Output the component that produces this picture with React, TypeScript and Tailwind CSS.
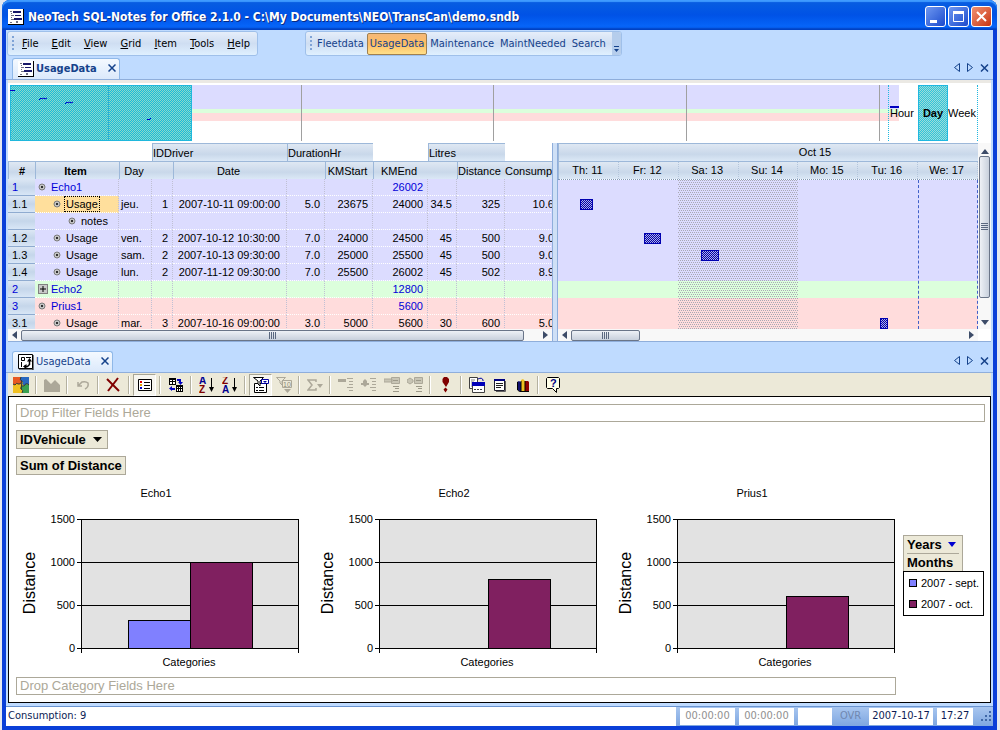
import { useId, type ReactNode } from "react";
import { clsx } from "clsx";

//@Types
interface IGridRow {
  num: string;
  label: string;
  level: number;
  tone: "violet" | "green" | "pink";
  parent?: boolean;
  plus?: boolean;
  selected?: boolean;
  cells: string[];
}

interface IChart {
  title: string;
  sept?: number;
  oct: number;
}
//------------------------------------------------------

//@Data
const menus = ["File", "Edit", "View", "Grid", "Item", "Tools", "Help"];
const views = ["Fleetdata", "UsageData", "Maintenance", "MaintNeeded", "Search"];

const rows: IGridRow[] = [
  { num: "1", label: "Echo1", level: 0, tone: "violet", parent: true, cells: ["", "", "", "", "", "26002", "", "", ""] },
  { num: "1.1", label: "Usage", level: 1, tone: "violet", selected: true, cells: ["jeu.", "1", "2007-10-11 09:00:00", "5.0", "23675", "24000", "34.5", "325", "10.6"] },
  { num: "", label: "notes", level: 2, tone: "violet", cells: ["", "", "", "", "", "", "", "", ""] },
  { num: "1.2", label: "Usage", level: 1, tone: "violet", cells: ["ven.", "2", "2007-10-12 10:30:00", "7.0", "24000", "24500", "45", "500", "9.0"] },
  { num: "1.3", label: "Usage", level: 1, tone: "violet", cells: ["sam.", "2", "2007-10-13 09:30:00", "7.0", "25000", "25500", "45", "500", "9.0"] },
  { num: "1.4", label: "Usage", level: 1, tone: "violet", cells: ["lun.", "2", "2007-11-12 09:30:00", "7.0", "25500", "26002", "45", "502", "8.9"] },
  { num: "2", label: "Echo2", level: 0, tone: "green", parent: true, plus: true, cells: ["", "", "", "", "", "12800", "", "", ""] },
  { num: "3", label: "Prius1", level: 0, tone: "pink", parent: true, cells: ["", "", "", "", "", "5600", "", "", ""] },
  { num: "3.1", label: "Usage", level: 1, tone: "pink", cells: ["mar.", "3", "2007-10-16 09:00:00", "3.0", "5000", "5600", "30", "600", "5.0"] },
];

const days = ["Th: 11", "Fr: 12", "Sa: 13", "Su: 14", "Mo: 15", "Tu: 16", "We: 17"];

const charts: IChart[] = [
  { title: "Echo1", sept: 325, oct: 1000 },
  { title: "Echo2", oct: 800 },
  { title: "Prius1", oct: 600 },
];

const tones = {
  violet: "bg-[#dcdcff]",
  green: "bg-[#dcffdc]",
  pink: "bg-[#ffdcdc]",
};

const levels = ["pl-[3px]", "pl-[18px]", "pl-[33px]"];
//------------------------------------------------------

//@Shared classes
const tahoma = "font-['DejaVu_Sans_Condensed','Noto_Sans',sans-serif]";
const header =
  "bg-linear-to-b from-[#dfe8f3] via-[#c9d8ea] via-60% to-[#dbe8f6] border-t border-[#9db8d9]";
const headCell = clsx(header, "h-[18px] p-0 border-l font-normal");
const plainHeadCell = clsx(header, "h-[18px] p-0");
const task = "absolute border border-[#0000b0]";
//------------------------------------------------------

// two-colour dither brush that fills its positioned parent
function Hatch({ a, b }: { a: string; b: string }) {
  const id = useId();
  return (
    <svg className="absolute inset-0 size-full" shapeRendering="crispEdges" aria-hidden="true">
      <defs>
        <pattern id={id} width="2" height="2" patternUnits="userSpaceOnUse">
          <path d="M0 0h2v2H0z" fill={b} />
          <path d="M0 0h1v1H0zM1 1h1v1H1z" fill={a} />
        </pattern>
      </defs>
      <rect width="100%" height="100%" fill={`url(#${id})`} />
    </svg>
  );
}

// dots over the weekend columns
function Dots() {
  const id = useId();
  return (
    <svg className="absolute inset-0 size-full" shapeRendering="crispEdges" aria-hidden="true">
      <defs>
        <pattern id={id} width="4" height="4" patternUnits="userSpaceOnUse">
          <path d="M0 0h1v1H0zM2 0h1v1H2zM1 2h1v1H1zM3 2h1v1H3z" fill="#a9a9b4" />
        </pattern>
      </defs>
      <rect width="100%" height="100%" fill={`url(#${id})`} />
    </svg>
  );
}

function OutlineIcon() {
  return (
    <svg width="16" height="16" viewBox="0 0 16 16" shapeRendering="crispEdges" aria-hidden="true">
      <path d="M0 0h16v16H0z" fill="#fff" />
      <path d="M15 0h1v16H0v-1h15z" fill="#000" />
      <path d="M2 2h2v1H2zM3 4h1v1H3zM3 6h3v1H3zM3 8h1v1H3zM3 10h3v1H3zM8 12h2v2H8zM2 13h2v1H2z" fill="#707080" />
      <path d="M5 2h8v2H5zM7 6h6v1H7zM6 9h8v2H6z" fill="#181868" />
    </svg>
  );
}

function PivotIcon() {
  return (
    <svg width="16" height="16" viewBox="0 0 16 16" aria-hidden="true">
      <path d="M.5.5h14v14H.5z" fill="#fff" stroke="#000" />
      <path d="M15 1v15H1" fill="none" stroke="#000" />
      <path d="M3.500 3.500h3v3h-3zM8 3.500h5M3.500 8v5" fill="none" stroke="#000" />
      <path d="M6 12.500h3.500l2-2V6" fill="none" stroke="#000" strokeWidth="1.500" />
      <path d="M9 7.500 11.500 4 14 7.500zM8.500 10 5 12.500 8.500 15z" fill="#000" />
    </svg>
  );
}

function TitleBar() {
  return (
    <header className="flex h-[30px] items-center gap-1 rounded-t-lg bg-linear-to-b from-[#0a5fe0] via-[#0052e6] to-[#0a6bff] pt-[3px] pr-[5px] pl-[6px] shadow-[inset_0_2px_1px_#3f9bff,inset_0_-2px_2px_#0040c0]">
      <OutlineIcon />
      <h1 className={clsx(tahoma, "grow truncate text-[12px] font-bold text-white [text-shadow:1px_1px_#0a2a80]")}>
        NeoTech SQL-Notes for Office 2.1.0 - C:\My Documents\NEO\TransCan\demo.sndb
      </h1>
      <div className="flex gap-[2px]">
        <button aria-label="Minimize" className="size-[21px] rounded-[3px] border border-white bg-linear-to-br from-[#6f97f0] to-[#1c48cc]">
          <svg viewBox="0 0 19 19"><path d="M4 13h7v3H4z" fill="#fff" /></svg>
        </button>
        <button aria-label="Maximize" className="size-[21px] rounded-[3px] border border-white bg-linear-to-br from-[#6f97f0] to-[#1c48cc]">
          <svg viewBox="0 0 19 19"><path d="M4.500 5v9.500h10V5" fill="none" stroke="#fff" /><path d="M4 4h11v3H4z" fill="#fff" /></svg>
        </button>
        <button aria-label="Close" className="size-[21px] rounded-[3px] border border-white bg-linear-to-br from-[#f09070] to-[#c83208]">
          <svg viewBox="0 0 19 19"><path d="m5 5 9 9m0-9-9 9" stroke="#fff" strokeWidth="2" /></svg>
        </button>
      </div>
    </header>
  );
}

function Grip() {
  return (
    <svg width="3" height="15" viewBox="0 0 3 15" className="shrink-0" aria-hidden="true">
      <path d="M1 0v15" stroke="#7fa3d6" strokeWidth="2" strokeDasharray="2 2" />
    </svg>
  );
}

function MenuBar() {
  const bar =
    "flex h-[25px] items-center rounded-[3px] border border-[#9fc0ea] bg-linear-to-b from-[#e6eefa] via-[#cfdef2] to-[#dff0ff] pl-1";
  return (
    <div className={clsx(tahoma, "flex gap-[47px] px-px pt-px text-[11px] leading-[16px]")}>
      <nav className={clsx(bar, "w-[251px]")}>
        <Grip />
        <div className="flex grow justify-between pr-[7px] pl-[7px]">
          {menus.map((m) => (
            <button key={m}>
              <span className="underline">{m[0]}</span>
              {m.slice(1)}
            </button>
          ))}
        </div>
      </nav>
      <nav className={clsx(bar, "w-[317px] text-[#15428b]")}>
        <Grip />
        <div className="flex grow items-center justify-between pr-[3px] pl-px">
          {views.map((v) => (
            <button
              key={v}
              className={clsx(
                "h-[22px] border px-[2px]",
                v === "UsageData"
                  ? "rounded-[2px] border-[#a08050] bg-linear-to-b from-[#f5b878] via-[#fdbd62] to-[#ffe08a]"
                  : "border-transparent"
              )}
            >
              {v}
            </button>
          ))}
        </div>
        <button aria-label="More" className="flex h-full w-[11px] items-end justify-center rounded-r-[2px] bg-[#b5cdec] pb-[3px]">
          <svg width="5" height="6" viewBox="0 0 5 6"><path d="M0 0h5v1H0zM0 3h5L2.500 6z" fill="#15428b" /></svg>
        </button>
      </nav>
    </div>
  );
}

function TabStrip({ icon, bold }: { icon: ReactNode; bold?: boolean }) {
  return (
    <div className={clsx(tahoma, "flex h-[21px] items-end border-b border-[#8faedb] px-[6px] text-[11px] text-[#15428b]")}>
      <div className="flex h-[21px] items-center gap-[2px] rounded-t-[3px] border border-b-0 border-[#8fb8e8] bg-linear-to-b from-[#f4f9ff] to-[#dbe9fb] pr-[3px] pl-[5px]">
        {icon}
        <button className={clsx("whitespace-nowrap", bold && "font-bold")}>UsageData</button>
        <button aria-label="Close tab" className="ml-[9px] pb-[3px]">
          <svg width="8" height="8" viewBox="0 0 8 8"><path d="m.5.5 7 7m0-7-7 7" stroke="#15428b" strokeWidth="1.500" /></svg>
        </button>
      </div>
      <div className="mr-[-2px] mb-[7px] ml-auto flex items-center gap-[7px]">
        <button aria-label="Previous tab">
          <svg width="6" height="9" viewBox="0 0 6 9"><path d="M5.500.5v8l-5-4z" fill="none" stroke="#15428b" /></svg>
        </button>
        <button aria-label="Next tab">
          <svg width="6" height="9" viewBox="0 0 6 9"><path d="M.5.5v8l5-4z" fill="none" stroke="#15428b" /></svg>
        </button>
        <button aria-label="Close">
          <svg width="9" height="8" viewBox="0 0 9 8"><path d="m1 .5 7 7m0-7-7 7" stroke="#15428b" strokeWidth="1.500" /></svg>
        </button>
      </div>
    </div>
  );
}

function Overview() {
  return (
    <div className="relative mr-[13px] ml-[2px] flex h-[56px] justify-end text-[11px]">
      {/* timeline background */}
      <div className="absolute inset-y-0 right-[79px] left-0">
        <div className="h-[24px] bg-[#dcdcff]" />
        <div className="h-1 bg-[#dcffdc]" />
        <div className="h-2 bg-[#ffdcdc]" />
      </div>
      <div className="absolute inset-y-0 left-[291px] w-px bg-[#a0a0a0]" />
      <div className="absolute inset-y-0 left-[483px] w-px bg-[#a0a0a0]" />
      <div className="absolute inset-y-0 left-[676px] w-px bg-[#a0a0a0]" />
      <div className="absolute inset-y-0 left-[869px] w-px bg-[#a0a0a0]" />
      {/* visible range */}
      <div className="absolute inset-y-0 left-0 w-[182px] border border-[#20b8dc]">
        <Hatch a="#18bcdc" b="#8fd8c8" />
        <div className="relative ml-[97px] h-full w-px bg-[#30b0d0]" />
      </div>
      <svg width="182" height="56" viewBox="0 0 182 56" className="absolute top-0 left-0" aria-hidden="true">
        <path d="m0 5 1 1 1-1 1 1 1-1 1 1M29 15l2-2 1 1 2-1 1 1 2-1M55 19l2-2 1 1 2-1 1 1 2-1M137 35l1-1 1 1 2-2" fill="none" stroke="#0000c8" />
      </svg>
      {/* scale buttons */}
      <div className="relative flex w-[90px]">
        <span className="absolute top-[21px] left-[2px] h-[2px] w-[9px] bg-[#0000c0]" />
        <button className="w-[30px] border-l border-dotted border-[#20b8e0] pl-px text-left">Hour</button>
        <button className="relative w-[30px] border border-[#20b8e0] text-center font-bold">
          <Hatch a="#30c4dc" b="#9fdcd8" />
          <span className="relative">Day</span>
        </button>
        <button className="w-[30px] border-r border-dotted border-[#20b8e0] text-left">Week</button>
      </div>
    </div>
  );
}

function Bullet() {
  return (
    <svg width="8" height="8" viewBox="0 0 8 8" className="shrink-0" aria-hidden="true">
      <circle cx="4" cy="4" r="3" fill="#c4c4c4" stroke="#7c7c7c" />
      <path d="M3 3h2v2H3z" fill="#303030" />
    </svg>
  );
}

function HScroll({ thumb }: { thumb: string }) {
  return (
    <div className="flex h-[12px] items-center bg-[#f8f8f8] px-1">
      <button aria-label="Scroll left" className="w-[9px]">
        <svg width="5" height="8" viewBox="0 0 5 8"><path d="M5 0v8L0 4z" fill="#3d4c68" /></svg>
      </button>
      <div className="flex grow">
        <div className={clsx("flex h-[11px] items-center justify-center rounded-[2px] border border-[#6a7588] bg-linear-to-b from-[#eef1f6] to-[#c8d0dc]", thumb)}>
          <svg width="8" height="7" viewBox="0 0 8 7"><path d="M.5 0v7m2-7v7m2-7v7m2-7v7" stroke="#5a6880" /></svg>
        </div>
      </div>
      <button aria-label="Scroll right">
        <svg width="5" height="8" viewBox="0 0 5 8"><path d="M0 0v8l5-4z" fill="#3d4c68" /></svg>
      </button>
    </div>
  );
}

function DataGrid() {
  return (
    <div className="w-[544px] shrink-0 overflow-hidden">
      <div className="h-[186px] overflow-hidden">
        <table className="w-[547px] table-fixed border-separate border-spacing-0 text-[11px] leading-[16px]">
          <colgroup>
            <col className="w-[27px]" />
            <col className="w-[84px]" />
            <col className="w-[33px]" />
            <col className="w-[21px]" />
            <col className="w-[114px]" />
            <col className="w-[38px]" />
            <col className="w-[48px]" />
            <col className="w-[55px]" />
            <col className="w-[29px]" />
            <col className="w-[48px]" />
            <col className="w-[50px]" />
          </colgroup>
          <thead>
            <tr className="text-left">
              <td colSpan={3} className="h-[18px] p-0" />
              <th colSpan={2} className={headCell}>IDDriver</th>
              <th colSpan={2} className={headCell}>DurationHr</th>
              <td className="p-0" />
              <th colSpan={2} className={headCell}>Litres</th>
              <td className="p-0" />
            </tr>
            <tr>
              <th className={clsx(headCell, "font-bold!")}>#</th>
              <th className={clsx(headCell, "pr-1! font-bold!")}>Item</th>
              <th className={clsx(headCell, "pr-1!")}>Day</th>
              <th className={plainHeadCell} />
              <th className={clsx(headCell, "pr-1!")}>Date</th>
              <th className={plainHeadCell} />
              <th className={clsx(headCell, "pr-1!")}>KMStart</th>
              <th className={clsx(headCell, "pr-1!")}>KMEnd</th>
              <th className={plainHeadCell} />
              <th className={clsx(headCell, "text-left")}>Distance</th>
              <th className={clsx(plainHeadCell, "overflow-hidden text-left font-normal")}>Consumpt</th>
            </tr>
          </thead>
          <tbody>
            {rows.map((row, i) => (
              <tr key={i} className={tones[row.tone]}>
                <th
                  scope="row"
                  className={clsx(
                    "h-[17px] border-b border-[#8fabd0] bg-linear-to-b from-[#dce7f4] via-[#c5d6ea] to-[#d8e6f6] p-0 pl-1 text-left font-normal",
                    row.parent && "text-[#0000d8]"
                  )}
                >
                  {row.num}
                </th>
                <td className={clsx("border-r border-b border-dotted border-r-[#c0c0d4] border-b-white p-0", row.selected && "bg-[#ffdf9c]")}>
                  <div className={clsx("flex items-center", levels[row.level])}>
                    {row.plus ? (
                      <button aria-label="Expand" className="mr-[2px] size-[10px] border border-[#808080] bg-[#c8c8c8]">
                        <svg viewBox="0 0 8 8"><path d="M1 4h6M4 1v6" stroke="#000" /></svg>
                      </button>
                    ) : (
                      <span className="mr-1 flex"><Bullet /></span>
                    )}
                    <span
                      className={clsx(
                        "px-px leading-[14px]",
                        row.parent && "text-[#0000d8]",
                        row.selected && "outline outline-dotted outline-black"
                      )}
                    >
                      {row.label}
                    </span>
                  </div>
                </td>
                {row.cells.map((c, k) => (
                  <td
                    key={k}
                    className={clsx(
                      "border-r border-b border-dotted border-r-[#c0c0d4] border-b-white p-0 whitespace-nowrap",
                      k === 0 && "pl-[2px]!",
                      k > 0 && k < 8 && "pr-1! text-right",
                      k === 2 && "pr-[6px]!",
                      k === 8 && "text-right",
                      row.parent && "text-[#0000d8]"
                    )}
                  >
                    {c}
                  </td>
                ))}
              </tr>
            ))}
          </tbody>
        </table>
      </div>
      <HScroll thumb="w-[503px]" />
    </div>
  );
}

function Gantt() {
  return (
    <div className="min-w-0 grow text-[11px] leading-[16px]">
      <div className={clsx(header, "flex h-[18px] border-l")}>
        <span className="ml-[57%] pl-px">Oct 15</span>
      </div>
      <div className={clsx(header, "flex h-[18px] border-l")}>
        {days.map((d) => (
          <span key={d} className="flex-1 border-r border-dotted border-[#b4c6dc] pr-[2px] text-center">{d}</span>
        ))}
      </div>
      {/* task canvas */}
      <div className="relative h-[150px] overflow-hidden border-t border-dotted border-[#8098b8]">
        <div className="h-[101px] bg-[#dcdcff]" />
        <div className="h-[17px] bg-[#dcffdc]" />
        <div className="h-[32px] bg-[#ffdcdc]" />
        <div className="absolute inset-y-0 left-2/7 w-2/7"><Dots /></div>
        <div className="absolute inset-y-0 left-6/7 border-l border-dashed border-[#4060c8]" />
        <div className="absolute inset-y-0 right-0 border-l border-dashed border-[#4060c8]" />
        <div className={clsx(task, "top-[19px] left-[22px] h-[11px] w-[13px]")}><Hatch a="#0000a8" b="#b0b0e8" /></div>
        <div className={clsx(task, "top-[53px] left-[86px] h-[11px] w-[17px]")}><Hatch a="#0000a8" b="#b0b0e8" /></div>
        <div className={clsx(task, "top-[70px] left-[143px] h-[11px] w-[18px]")}><Hatch a="#0000a8" b="#b0b0e8" /></div>
        <div className={clsx(task, "top-[138px] left-[322px] h-[11px] w-[8px]")}><Hatch a="#0000a8" b="#b0b0e8" /></div>
      </div>
      <HScroll thumb="w-[69px]" />
    </div>
  );
}

function VScroll() {
  return (
    <div className="mb-[12px] flex w-[13px] shrink-0 flex-col items-center bg-[#f8f8f8] pt-[3px] pb-1">
      <button aria-label="Scroll up" className="h-[10px]">
        <svg width="8" height="5" viewBox="0 0 8 5"><path d="M0 5h8L4 0z" fill="#3d4c68" /></svg>
      </button>
      <div className="flex h-[142px] w-[11px] items-center justify-center rounded-[2px] border border-[#6a7588] bg-linear-to-r from-[#eef1f6] to-[#c8d0dc]">
        <svg width="7" height="8" viewBox="0 0 7 8"><path d="M0 .5h7m-7 2h7m-7 2h7m-7 2h7" stroke="#5a6880" /></svg>
      </div>
      <button aria-label="Scroll down" className="mt-auto">
        <svg width="8" height="5" viewBox="0 0 8 5"><path d="M0 0h8L4 5z" fill="#3d4c68" /></svg>
      </button>
    </div>
  );
}

function Tool({ label, boxed, children }: { label: string; boxed?: boolean; children: ReactNode }) {
  return (
    <button
      aria-label={label}
      className={clsx(
        "flex h-[22px] w-[23px] shrink-0 items-center justify-center",
        boxed && "border border-t-[#a8a594] border-r-white border-b-white border-l-[#a8a594] bg-[#f6f5ee]"
      )}
    >
      <svg width="16" height="16" viewBox="0 0 16 16" className="shrink-0">{children}</svg>
    </button>
  );
}

function Sep() {
  return <span className="mx-[3px] h-[18px] w-[2px] shrink-0 border-r border-l border-r-white border-l-[#b4b1a0]" />;
}

function SortIcon({ first, second }: { first: string; second: string }) {
  return (
    <>
      <text x="0" y="7" fontSize="10" fontWeight="bold" fill={first === "A" ? "#000090" : "#800000"}>{first}</text>
      <text x="0" y="16" fontSize="10" fontWeight="bold" fill={second === "A" ? "#000090" : "#800000"}>{second}</text>
      <path d="M12 1h1v10h-1z" fill="#000" />
      <path d="M10 10h5l-2.500 5z" fill="#000" />
    </>
  );
}

function PivotToolbar() {
  return (
    <div className="flex h-[23px] items-center overflow-hidden bg-[#ece9d8] pl-px font-['Liberation_Sans',sans-serif]">
      <Tool label="Office">
        <path d="M0 0h16v16H0z" fill="#f0c020" />
        <path d="M0 0h8q-2 3 1 4-1 4-4 3-1-2-3 1l-2-1z" fill="#e85820" />
        <path d="M8 0h8v8q-3-2-4 1l-3-2q2-2-1-3-2-1 0-4z" fill="#2868c0" />
        <path d="M16 8v8H9q2-3-1-4 0-4 3-3 2-3 5-1z" fill="#38a050" />
        <path d="M8 0q-2 3 1 4-1 4-4 3-1-2-3 1l-2-1M16 8q-3-3-5 1-3-1-3 3 3 1 1 4M9 4l-1 8" fill="none" stroke="#303838" />
      </Tool>
      <Sep />
      <Tool label="Chart type">
        <path d="M0 15V3l2-1 5 5 4-4 5 5v7z" fill="#aca899" />
      </Tool>
      <Sep />
      <Tool label="Undo">
        <path d="M3 5v4h4M3 9l4-4q4-1 6 1 1 4-3 6" fill="none" stroke="#aca899" strokeWidth="1.500" />
      </Tool>
      <Sep />
      <Tool label="Delete">
        <path d="m1 2 12 12" stroke="#800000" strokeWidth="2" />
        <path d="M12 1 2 14" stroke="#800000" strokeWidth="2" />
      </Tool>
      <Sep />
      <Tool label="Show legend" boxed>
        <path d="M1.500 2.500h13v11h-13z" fill="#fff" stroke="#000" />
        <path d="M3 4h2v2H3z" fill="#e00000" />
        <path d="M3 7h2v2H3z" fill="#e0a000" />
        <path d="M3 10h2v2H3z" fill="#0000c0" />
        <path d="M7 5.500h6m-6 3h6m-6 3h6" stroke="#000" />
      </Tool>
      <Sep />
      <Tool label="By row or column">
        <path d="M1 1h7v7H1zM8 8h7v7H8z" fill="#000" />
        <path d="M2 3h2v1H2zM5 3h2v1H5zM2 5h2v2H2zM5 5h2v2H5zM9 10h1v1H9zM11 10h1v1h-1zM13 10h1v1h-1zM9 12h1v2H9zM11 12h1v2h-1zM13 12h1v2h-1z" fill="#fff" />
        <path d="M9 2h4v3h2l-2.500 3L10 5h1V4H9zM7 13H4v1L1 11.500 4 9v2h3z" fill="#0000c0" />
      </Tool>
      <Sep />
      <Tool label="Sort ascending"><SortIcon first="A" second="Z" /></Tool>
      <Tool label="Sort descending"><SortIcon first="Z" second="A" /></Tool>
      <Sep />
      <Tool label="AutoFilter" boxed>
        <path d="M1.500 6.500h12v9h-12z" fill="#fff" stroke="#000" />
        <path d="M.5.5h10L7 4v5L5 7V4z" fill="#fff" stroke="#000" />
        <path d="M8.500 2.500h7v4h-7z" fill="#fff" stroke="#0000a0" />
        <path d="M10 4h4l-2 2z" fill="#0000a0" />
        <path d="M3 10.500h2m1 0h5M3 13.500h2m1 0h5" stroke="#000" />
      </Tool>
      <Tool label="Show top/bottom">
        <path d="M.5.500h9L6 4v4L4 6V4zM6.500 3.500h9v7h-9z" fill="#ece9d8" stroke="#aca899" />
        <text x="7" y="10" fontSize="7" fill="#8c897a">10</text>
        <path d="M8 12h7l-3.500 4z" fill="#aca899" />
      </Tool>
      <Sep />
      <Tool label="AutoCalc">
        <path d="M9 5V3H1l4 5-4 5h8v-2" fill="none" stroke="#aca899" strokeWidth="1.500" />
        <path d="M10 7h6l-3 4z" fill="#aca899" />
      </Tool>
      <Sep />
      <Tool label="Subtotal">
        <path d="M0 2h8v3H0z" fill="#aca899" />
        <path d="M9 1.500h6m-4 3h4m-4 3h4m-6 3h6m-4 3h4" stroke="#aca899" />
      </Tool>
      <Tool label="Calculated totals">
        <path d="M0 6h2V4l2-2 2 2v2h2v2H6l-2 2-2-2H0z" fill="#aca899" />
        <path d="M9 1.500h6m-4 3h4m-4 3h4m-6 3h6m-4 3h4" stroke="#aca899" />
      </Tool>
      <Tool label="Collapse">
        <path d="M0 2h8v3H0zM7.500 .500h8v6h-8z" fill="#c8c5b5" stroke="#aca899" />
        <path d="M9 3.500h5M9 9.500h6m-4 2h4m-6 3h6" stroke="#9c9989" />
      </Tool>
      <Tool label="Expand">
        <path d="M0 3l3-2 3 2v2L3 7 0 5zM7.500 .500h8v6h-8z" fill="#c8c5b5" stroke="#aca899" />
        <path d="M9 3.500h5M9 9.500h6m-4 2h4m-6 3h6" stroke="#9c9989" />
      </Tool>
      <Sep />
      <Tool label="Refresh">
        <path d="M6 0h3l2 2v3L8 10 4.500 5V2zM7.500 10.500l2 2-2 3-2-3z" fill="#800000" />
      </Tool>
      <Sep />
      <Tool label="Export">
        <path d="M.5.500h8v11h-8z" fill="#fff" stroke="#404040" />
        <path d="M2 3h4M2 5h3M2 7h2M2 9h2" stroke="#808080" />
        <path d="M9 2q4-2 5 1v1" fill="none" stroke="#0000a0" />
        <path d="M3.500 5.500h12v10h-12z" fill="#fff" stroke="#404040" />
        <path d="M3 5h13v4H3z" fill="#0000b8" />
        <path d="M5 12.500h2m1 0h2m1 0h2" stroke="#404040" />
      </Tool>
      <Tool label="Commands and options">
        <path d="M2.500 2.500h10v11h-10z" fill="#fff" stroke="#202030" />
        <path d="M2 2h11v2H2z" fill="#000080" />
        <path d="M4 6.500h7m-7 2h7m-7 2h5" stroke="#202020" />
        <path d="M13.500 4v10.500H4" fill="none" stroke="#606060" />
      </Tool>
      <Tool label="Field list">
        <path d="M2 5l2-1 3 2v8H4l-2-2z" fill="#101070" />
        <path d="M6 3l2-1 2 2v10H6z" fill="#f0c020" />
        <path d="M10 4h3l1 1v9h-4z" fill="#900000" />
        <path d="M2.500 5v8l2 1.500H14M6 4v10M10 4v10" fill="none" stroke="#000" />
      </Tool>
      <Sep />
      <Tool label="Help">
        <path d="M1.500.500h11l1 1v9l-1 1h-2v4l-4-4h-5l-1-1v-9z" fill="#ffffe8" stroke="#000" />
        <text x="4" y="10" fontSize="11" fontWeight="bold" fill="#000080">?</text>
      </Tool>
    </div>
  );
}

function PivotChart({ chart }: { chart: IChart }) {
  const y = (v: number) => Math.round(166 - (v * 43) / 500) + 0.5;
  return (
    <svg width="298" height="194" viewBox="0 0 298 194" fontSize="11" className="shrink-0" role="img" aria-label={chart.title}>
      <text x="147" y="15" textAnchor="middle">{chart.title}</text>
      <path d="M72.500 37.500h217v129h-217z" fill="#e2e2e2" stroke="#000" />
      {[0, 500, 1000, 1500].map((v) => (
        <g key={v}>
          <path d={`M68 ${y(v)}h222`} stroke="#000" />
          <text x="66" y={y(v) + 3.5} textAnchor="end">{v}</text>
        </g>
      ))}
      <path d="M72.500 167v4M289.500 167v4" stroke="#000" />
      {chart.sept && (
        <rect x="119.500" y={y(chart.sept)} width="62" height={166.5 - y(chart.sept)} fill="#8080ff" stroke="#000" />
      )}
      <rect x="181.500" y={y(chart.oct)} width="62" height={166.5 - y(chart.oct)} fill="#802060" stroke="#000" />
      <text transform="translate(26 101) rotate(-90)" fontSize="16" textAnchor="middle">Distance</text>
      <text x="180" y="184" textAnchor="middle">Categories</text>
    </svg>
  );
}

function PivotView() {
  const field = "flex h-[19px] items-center border border-[#aca899] bg-[#ece9d8] px-[3px] text-[13px] font-bold";
  const drop = "h-[18px] border border-[#aca899] px-[3px] text-[13px] leading-[16px] text-[#aca899]";
  return (
    <section className="border border-black bg-white p-[7px]">
      <div className={clsx(drop, "mr-[-2px]")}>Drop Filter Fields Here</div>
      <div className="mt-2 flex">
        <button className={clsx(field, "gap-[7px] pr-[5px]!")}>
          IDVehicule
          <svg width="9" height="5" viewBox="0 0 9 5"><path d="M0 0h9L4.500 5z" fill="#000" /></svg>
        </button>
      </div>
      <div className="mt-[7px] flex">
        <button className={field}>Sum of Distance</button>
      </div>
      <div className="mx-[-7px] mt-[7px] flex">
        {charts.map((c) => (
          <PivotChart key={c.title} chart={c} />
        ))}
        <div className="mt-[53px] flex w-[81px] shrink-0 flex-col items-start text-[11px]">
          <div className="w-[60px] border border-b-0 border-[#aca899] bg-[#ece9d8] px-[3px] text-[13px] leading-[17px] font-bold">
            <button className="flex w-full items-center gap-[6px] border-b border-[#aca899]">
              Years
              <svg width="8" height="5" viewBox="0 0 8 5"><path d="M0 0h8L4 5z" fill="#0000d0" /></svg>
            </button>
            <button className="block">Months</button>
          </div>
          <ul className="flex h-[45px] w-[81px] flex-col justify-around border border-black pl-[5px] whitespace-nowrap">
            <li className="flex items-center gap-1">
              <span className="size-2 border border-black bg-[#8080ff]" />
              2007 - sept.
            </li>
            <li className="flex items-center gap-1">
              <span className="size-2 border border-black bg-[#802060]" />
              2007 - oct.
            </li>
          </ul>
        </div>
      </div>
      <div className={clsx(drop, "mt-px mr-[87px]")}>Drop Category Fields Here</div>
    </section>
  );
}

function StatusBar() {
  const cell = "flex h-[17px] items-center justify-center bg-white";
  return (
    <footer className={clsx(tahoma, "flex h-[20px] items-center gap-1 border-t border-[#6a94d0] bg-linear-to-b from-[#a8c6f0] to-[#7ea6e0] text-[11px] text-[#0c1c54]")}>
      <span className="flex h-full grow items-center bg-white pl-[2px]">Consumption: 9</span>
      <span className={clsx(cell, "w-[55px] text-[#909090]")}>00:00:00</span>
      <span className={clsx(cell, "w-[55px] text-[#909090]")}>00:00:00</span>
      <span className={clsx(cell, "w-[34px]")} />
      <span className="w-[29px] text-center text-[#7088b0]">OVR</span>
      <span className={clsx(cell, "w-[64px]")}>2007-10-17</span>
      <span className={clsx(cell, "w-[36px]")}>17:27</span>
      <svg width="16" height="12" viewBox="0 0 16 12" aria-hidden="true">
        <path d="M12 0h2v2h-2zM8 4h2v2H8zM12 4h2v2h-2zM4 8h2v2H4zM8 8h2v2H8zM12 8h2v2h-2z" fill="#4068a8" />
      </svg>
    </footer>
  );
}

export default function App() {
  return (
    <div className="bg-[#e4e8f0] pr-[3px] pl-[2px] font-['Liberation_Sans',Arial,sans-serif] text-black">
      <div className="rounded-t-lg bg-[#0a3fd8] pb-1">
        <TitleBar />
        <div className="mx-1 bg-[#bfdbff]">
          <MenuBar />
          <div className="pt-[3px]">
            <TabStrip icon={<OutlineIcon />} bold />
          </div>
          <main className="px-[2px]">
            {/* grid and timeline */}
            <section className="border-t-3 border-b border-t-[#ebe9e4] border-b-[#8faedb] bg-white pt-[2px]">
              <Overview />
              <div className="mt-[2px] flex">
                <DataGrid />
                <div className="w-[6px] shrink-0 border-x border-[#8faedb] bg-[#cfe0f6]" />
                <Gantt />
                <VScroll />
              </div>
            </section>
            {/* pivot chart */}
            <div className="mx-[-2px] mt-[10px]">
              <TabStrip icon={<PivotIcon />} />
            </div>
            <PivotToolbar />
            <PivotView />
          </main>
          <div className="mt-[3px]">
            <StatusBar />
          </div>
        </div>
      </div>
    </div>
  );
}
